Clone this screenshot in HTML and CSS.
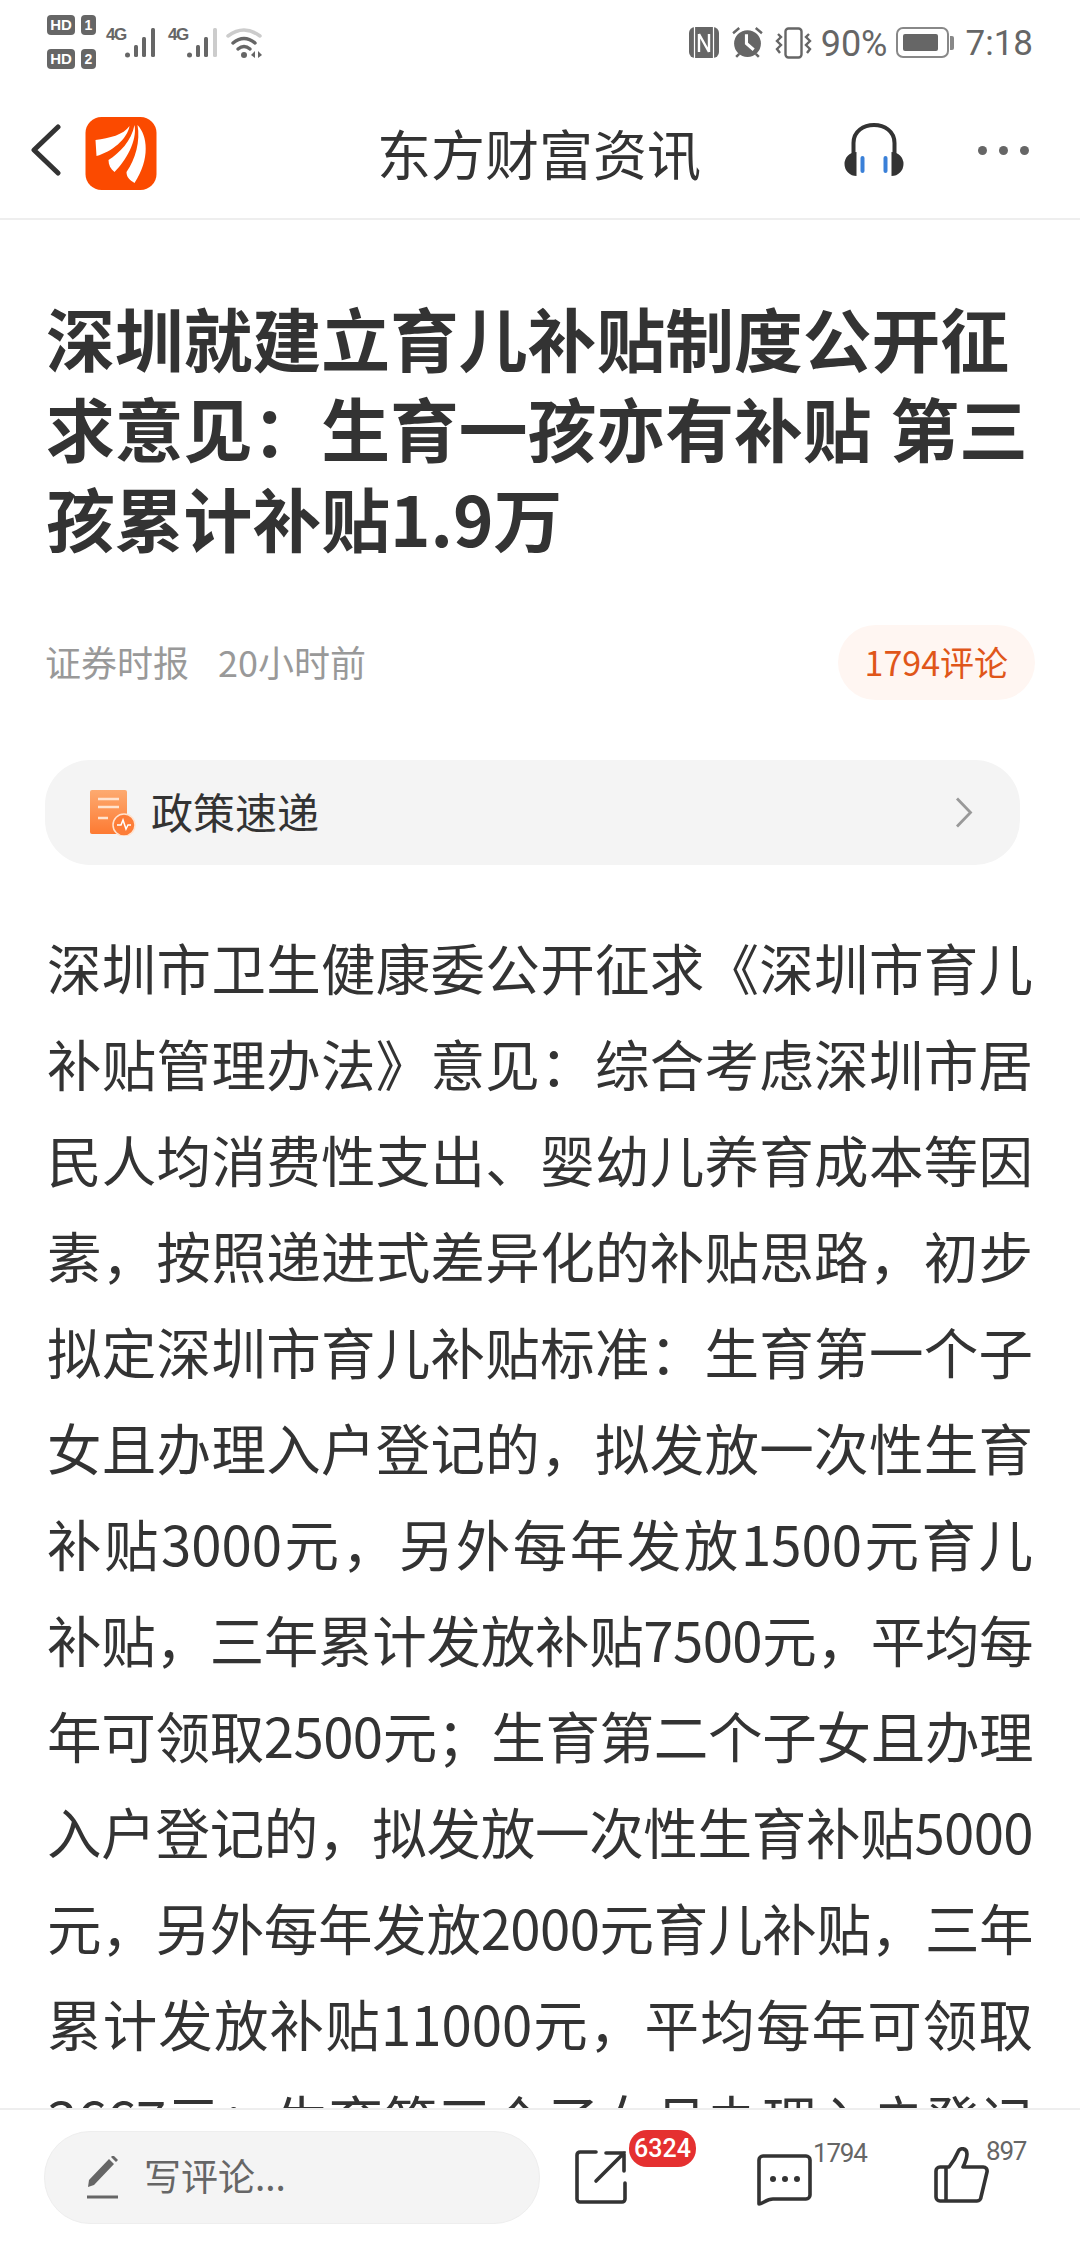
FILE: index.html
```html
<!DOCTYPE html>
<html lang="zh-CN">
  <head>
    <meta charset="UTF-8" />
    <title>东方财富资讯</title>
    <link rel="stylesheet" href="styles.css">
  </head>
  <body>
    <div class="status-bar">
      <div class="sims">
        <div class="sim"><span class="hd">HD</span><span class="sim-no">1</span></div>
        <div class="sim"><span class="hd">HD</span><span class="sim-no">2</span></div>
      </div>
      <div class="signal">
        <span class="net">4G</span>
        <svg width="33" height="32" viewBox="0 0 33 32">
          <circle cx="3.5" cy="28" r="2.5" fill="#666"/>
          <rect x="10" y="18" width="4" height="12" rx="1.5" fill="#666"/>
          <rect x="18" y="10" width="4" height="20" rx="1.5" fill="#666"/>
          <rect x="27" y="1" width="4" height="29" rx="1.5" fill="#666"/>
        </svg>
      </div>
      <div class="signal">
        <span class="net">4G</span>
        <svg width="33" height="32" viewBox="0 0 33 32">
          <circle cx="3.5" cy="28" r="2.5" fill="#666"/>
          <rect x="10" y="18" width="4" height="12" rx="1.5" fill="#666"/>
          <rect x="18" y="10" width="4" height="20" rx="1.5" fill="#666"/>
          <rect x="27" y="1" width="4" height="29" rx="1.5" fill="#ccc"/>
        </svg>
      </div>
      <svg class="wifi" width="38" height="32" viewBox="0 0 38 32">
        <path d="M2 9 Q18 -3 34 9" fill="none" stroke="#ccc" stroke-width="3.5" stroke-linecap="round"/>
        <path d="M7 16 Q18 7 29 16" fill="none" stroke="#666" stroke-width="3.5" stroke-linecap="round"/>
        <path d="M12 22 Q18 17 24 22" fill="none" stroke="#666" stroke-width="3.5" stroke-linecap="round"/>
        <circle cx="18" cy="28" r="3" fill="#666"/>
        <path d="M29 24 L25 28 L29 31 Z M32 24 L36 28 L32 31 Z" fill="#666"/>
      </svg>
      <div class="status-right">
        <svg width="30" height="31" viewBox="0 0 30 31">
          <rect width="30" height="31" rx="6" fill="#666"/>
          <path d="M5.5 0 V31 M24.5 0 V31" stroke="#fff" stroke-width="1.2"/>
          <path d="M10 7 L10 25 M10 7 L20 25 M20 7 V25" fill="none" stroke="#fff" stroke-width="2.4"/>
        </svg>
        <svg class="alarm" width="33" height="33" viewBox="0 0 32 32">
          <circle cx="16" cy="17" r="13" fill="#666"/>
          <path d="M15 8 V17 L22 23" fill="none" stroke="#fff" stroke-width="3"/>
          <path d="M2 7 L8 2 M30 7 L24 2 M5 30 L8 27 M27 30 L24 27" stroke="#666" stroke-width="2.4"/>
        </svg>
        <svg class="vibrate" width="37" height="32" viewBox="0 0 37 32">
          <rect x="10.5" y="1.5" width="16" height="29" rx="3" fill="none" stroke="#666" stroke-width="2.4"/>
          <path d="M3 7 L6 10 L2 14 L6 18 L2 22 L5 26 M34 7 L31 10 L35 14 L31 18 L35 22 L32 26" fill="none" stroke="#666" stroke-width="2.4"/>
        </svg>
        <span class="battery-text">90%</span>
        <div class="battery"><div class="battery-level"></div></div>
        <div class="battery-cap"></div>
        <span class="clock">7:18</span>
      </div>
    </div>

    <div class="top-nav">
      <svg class="back" width="32" height="52" viewBox="0 0 32 52">
        <path d="M28 3 L4 26 L28 49" fill="none" stroke="#333" stroke-width="5" stroke-linecap="round" stroke-linejoin="round"/>
      </svg>
      <svg class="logo" width="72" height="73" viewBox="0 0 71 73">
        <rect width="71" height="73" rx="16" fill="#fb4a00"/>
        <path d="M10 23 C24 21 38 18 44 9 C42 22 26 35 11 39 Z" fill="#fff"/>
        <path d="M23 43 C34 36 46 24 49 8 C52 24 40 44 29 55 C25 52 23 48 23 43 Z" fill="#fff"/>
        <path d="M41 55 C50 42 55 24 52 8 C62 18 65 42 49 66 C44 63 41 60 41 55 Z" fill="#fff"/>
      </svg>
      <div class="nav-title">东方财富资讯</div>
      <div class="nav-right">
        <svg width="68" height="54" viewBox="0 0 63 54">
          <path d="M11 40 V20 C11 -4 52 -4 52 20 V40" fill="none" stroke="#333" stroke-width="4"/>
          <path d="M14 29 A12 12 0 0 0 14 53 Z M49 29 A12 12 0 0 1 49 53 Z" fill="#333"/>
          <rect x="18" y="33" width="4" height="17" rx="2" fill="#3a80d8"/>
          <rect x="41" y="33" width="4" height="17" rx="2" fill="#3a80d8"/>
        </svg>
        <div class="dots"><i></i><i></i><i></i></div>
      </div>
    </div>

    <div class="article">
      <h1 class="headline">深圳就建立育儿补贴制度公开征求意见：生育一孩亦有补贴 第三孩累计补贴1.9万</h1>
      <div class="meta">
        <span class="source">证券时报</span>
        <span class="time">20小时前</span>
        <span class="comment-pill">1794评论</span>
      </div>
      <div class="policy">
        <svg width="46" height="46" viewBox="0 0 46 46">
          <defs>
            <linearGradient id="doc" x1="0" y1="0" x2="0" y2="1">
              <stop offset="0" stop-color="#fdaa70"/>
              <stop offset="1" stop-color="#fd7a32"/>
            </linearGradient>
          </defs>
          <rect x="0" y="0" width="37" height="44" rx="2" fill="url(#doc)"/>
          <path d="M8 9 H29 M8 17 H29 M8 28 H18" stroke="#ffe3cf" stroke-width="2.4"/>
          <circle cx="34" cy="35" r="11" fill="#fd7d38" stroke="#ffe3cf" stroke-width="1.5"/>
          <path d="M27 35 H31 L33 30 L36 39 L38 35 H41" fill="none" stroke="#fff" stroke-width="1.5"/>
        </svg>
        <span class="policy-text">政策速递</span>
        <svg class="policy-arrow" width="18" height="31" viewBox="0 0 18 31">
          <path d="M2 1.5 L15.5 15.5 L2 29.5" fill="none" stroke="#999" stroke-width="2.8"/>
        </svg>
      </div>
      <div class="body-text">
        <span>深圳市卫生健康委公开征求《深圳市育儿</span>
        <span>补贴管理办法》意见：综合考虑深圳市居</span>
        <span>民人均消费性支出、婴幼儿养育成本等因</span>
        <span>素，按照递进式差异化的补贴思路，初步</span>
        <span>拟定深圳市育儿补贴标准：生育第一个子</span>
        <span>女且办理入户登记的，拟发放一次性生育</span>
        <span>补贴3000元，另外每年发放1500元育儿</span>
        <span class="tight">补贴，三年累计发放补贴7500元，平均每</span>
        <span class="tight">年可领取2500元；生育第二个子女且办理</span>
        <span class="tight">入户登记的，拟发放一次性生育补贴5000</span>
        <span class="tight">元，另外每年发放2000元育儿补贴，三年</span>
        <span>累计发放补贴11000元，平均每年可领取</span>
        <span class="tight">3667元；生育第三个子女且办理入户登记</span>
      </div>
    </div>

    <div class="bottom-bar">
      <div class="comment-input">
        <svg width="32" height="44" viewBox="0 0 32 44">
          <path d="M1 31 L2 24 L22 3 L27 8 L7 29 Z M24 1 L26 -1 L31 4 L29 6 Z" fill="#666"/>
          <path d="M0 41 H31" stroke="#666" stroke-width="3"/>
        </svg>
        <span>写评论...</span>
      </div>
      <div class="action share">
        <svg width="52" height="54" viewBox="0 0 52 54">
          <path d="M21 2 H5 A3 3 0 0 0 2 5 V49 A3 3 0 0 0 5 52 H47 A3 3 0 0 0 50 49 V33" fill="none" stroke="#333" stroke-width="3.6" stroke-linecap="round"/>
          <path d="M31 3 H49 V21 M49 3 L21 31" fill="none" stroke="#333" stroke-width="3.6" stroke-linecap="round"/>
        </svg>
        <span class="badge">6324</span>
      </div>
      <div class="action talk">
        <svg width="55" height="53" viewBox="0 0 55 53">
          <path d="M2 50 V6 A4 4 0 0 1 6 2 H49 A4 4 0 0 1 53 6 V41 A4 4 0 0 1 49 45 H16 C9 45 6 50 2 50 Z" fill="none" stroke="#333" stroke-width="3.6" stroke-linejoin="round"/>
          <circle cx="16" cy="25" r="3" fill="#333"/>
          <circle cx="28" cy="25" r="3" fill="#333"/>
          <circle cx="40" cy="25" r="3" fill="#333"/>
        </svg>
        <span class="count">1794</span>
      </div>
      <div class="action like">
        <svg width="55" height="56" viewBox="0 0 55 56">
          <path d="M2 24 A4 4 0 0 1 6 20 H15 C19 15 22 10 24 5 C26 0 33 1 33 7 C33 12 31 16 29 20 H49 A4 4 0 0 1 53 25 L47 50 A4 4 0 0 1 43 54 H6 A4 4 0 0 1 2 50 Z" fill="none" stroke="#333" stroke-width="3.6" stroke-linejoin="round"/>
          <path d="M12 20 V54" stroke="#333" stroke-width="3.6"/>
        </svg>
        <span class="count">897</span>
      </div>
    </div>
  </body>
</html>
```

FILE: styles.css
```css
* {
  box-sizing: border-box;
}
html,
body {
  margin: 0;
  height: 2244px;
  overflow: hidden;
}
body {
  position: relative;
  background: #fff;
  color: #333;
  font-family: "Noto Sans CJK SC", Roboto, sans-serif;
}

/* status bar */
.status-bar {
  display: flex;
  align-items: flex-start;
  height: 83px;
  padding: 15px 47px 0 47px;
  color: #666;
}
.sims {
  display: flex;
  flex-direction: column;
  gap: 14px;
}
.sim {
  display: flex;
  gap: 6px;
  height: 20px;
}
.hd,
.sim-no {
  display: block;
  border-radius: 4px;
  background: #666;
  color: #fff;
  font: bold 15px/20px "Liberation Sans", sans-serif;
  text-align: center;
}
.hd {
  width: 28px;
}
.sim-no {
  width: 15px;
  font-size: 14px;
}
.signal {
  display: flex;
  margin: 12px 0 0 10px;
}
.signal + .signal {
  margin-left: 11px;
}
.net {
  width: 18px;
  font: bold 17px/16px "Liberation Sans", sans-serif;
  letter-spacing: -1.5px;
}
.wifi {
  margin: 12px 0 0 7px;
}
.status-right {
  display: flex;
  align-items: center;
  height: 31px;
  margin: 12px 0 0 auto;
}
.alarm {
  margin-left: 12px;
}
.vibrate {
  margin-left: 11px;
}
.battery-text,
.clock {
  padding-top: 2px;
  font: 35px/32px Roboto, sans-serif;
}
.battery-text {
  margin-left: 9px;
  font-size: 36px;
}
.battery {
  width: 53px;
  height: 31px;
  margin-left: 8px;
  padding: 5px;
  border: 2.5px solid #888;
  border-radius: 7px;
}
.battery-level {
  width: 90%;
  height: 100%;
  border-radius: 2px;
  background: #666;
}
.battery-cap {
  width: 4px;
  height: 14px;
  margin-left: 1px;
  border-radius: 0 2px 2px 0;
  background: #888;
}
.clock {
  margin-left: 12px;
}

/* nav */
.top-nav {
  display: flex;
  align-items: center;
  height: 137px;
  padding: 0 51px 1px 30px;
  border-bottom: 2px solid #eee;
}
.logo {
  margin: 6px 0 0 23px;
}
.nav-title {
  margin: 6px 0 0 220px;
  font-size: 54px;
  line-height: 70px;
}
.nav-right {
  display: flex;
  align-items: center;
  margin-left: auto;
}
.dots {
  display: flex;
  gap: 12px;
  margin-left: 70px;
}
.dots i {
  display: block;
  width: 9px;
  height: 9px;
  border-radius: 50%;
  background: #666;
}

/* article */
.article {
  padding: 72px 47px 0 47px;
}
.headline {
  margin: 0 -8px 0 -1px;
  font-size: 68.8px;
  font-weight: 700;
  line-height: 90px;
  word-spacing: 3px;
}
.meta {
  display: flex;
  align-items: center;
  margin: 63px -2px 0 -2px;
  color: #999;
  font-size: 36px;
}
.source,
.time {
  margin-bottom: 3px;
}
.time {
  margin-left: 29px;
}
.comment-pill {
  margin: 0 0 0 auto;
  padding: 0 27px 2px;
  border-radius: 38px;
  background: #fff6f2;
  color: #e0561a;
  font-size: 34px;
  line-height: 73px;
}
.policy {
  display: flex;
  align-items: center;
  height: 105px;
  margin: 60px 13px 0 -2px;
  padding: 0 47px 0 45px;
  border-radius: 45px;
  background: #f4f4f4;
}
.policy-text {
  margin: 0 0 4px 15px;
  font-size: 42px;
}
.policy-arrow {
  margin-left: auto;
}
.body-text {
  margin-top: 54px;
  font-size: 54.5px;
  line-height: 96px;
}
.body-text span {
  display: block;
  white-space: nowrap;
  text-align: justify;
  text-align-last: justify;
}
.body-text .tight {
  letter-spacing: -0.6px;
}

/* bottom bar */
.bottom-bar {
  position: absolute;
  left: 0;
  right: 0;
  bottom: 0;
  height: 136px;
  border-top: 2px solid #eee;
  background: #fff;
}
.comment-input {
  position: absolute;
  left: 44px;
  top: 21px;
  display: flex;
  align-items: center;
  width: 496px;
  height: 93px;
  padding: 0 0 0 42px;
  border: 1px solid #eee;
  border-radius: 46px;
  background: #f4f4f4;
  color: #666;
  font-size: 37px;
}
.comment-input span {
  margin: 0 0 5px 25px;
}
.action {
  position: absolute;
}
.action svg {
  display: block;
}
.share {
  left: 575px;
  top: 40px;
}
.talk {
  left: 757px;
  top: 44px;
}
.like {
  left: 934px;
  top: 37px;
}
.badge {
  position: absolute;
  left: 54px;
  top: -20px;
  padding: 0 5px;
  border-radius: 18px;
  background: #e53030;
  color: #fff;
  font: 500 25px/37px Roboto, sans-serif;
}
.count {
  position: absolute;
  top: -16px;
  left: 56px;
  color: #666;
  font: 26px/30px Roboto, sans-serif;
  letter-spacing: -1.2px;
}
.like .count {
  left: 52px;
  top: -11px;
}
```
